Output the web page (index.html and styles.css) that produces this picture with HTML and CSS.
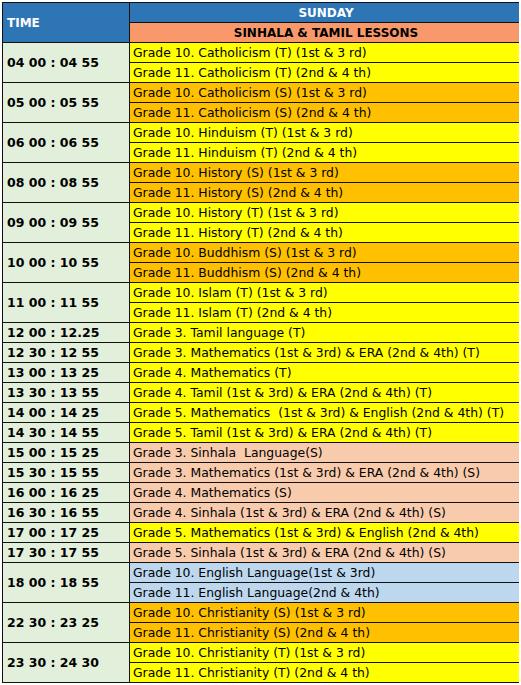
FILE: index.html
```html
<!DOCTYPE html>
<html>
<head>
<meta charset="utf-8">
<link rel="stylesheet" href="styles.css">
</head>
<body>
<table class="sched">
  <colgroup><col class="c-time"><col class="c-les"></colgroup>
  <tr class="hrow"><th class="h-time" rowspan="2">TIME</th><th class="h-day">SUNDAY</th></tr>
  <tr class="hrow"><th class="h-sub">SINHALA &amp; TAMIL LESSONS</th></tr>
  <tr><td class="t" rowspan="2">04 00 : 04 55</td><td class="y">Grade 10. Catholicism (T) (1st &amp; 3 rd)</td></tr>
  <tr><td class="y">Grade 11. Catholicism (T) (2nd &amp; 4 th)</td></tr>
  <tr><td class="t" rowspan="2">05 00 : 05 55</td><td class="o">Grade 10. Catholicism (S) (1st &amp; 3 rd)</td></tr>
  <tr><td class="o">Grade 11. Catholicism (S) (2nd &amp; 4 th)</td></tr>
  <tr><td class="t" rowspan="2">06 00 : 06 55</td><td class="y">Grade 10. Hinduism (T) (1st &amp; 3 rd)</td></tr>
  <tr><td class="y">Grade 11. Hinduism (T) (2nd &amp; 4 th)</td></tr>
  <tr><td class="t" rowspan="2">08 00 : 08 55</td><td class="o">Grade 10. History (S) (1st &amp; 3 rd)</td></tr>
  <tr><td class="o">Grade 11. History (S) (2nd &amp; 4 th)</td></tr>
  <tr><td class="t" rowspan="2">09 00 : 09 55</td><td class="y">Grade 10. History (T) (1st &amp; 3 rd)</td></tr>
  <tr><td class="y">Grade 11. History (T) (2nd &amp; 4 th)</td></tr>
  <tr><td class="t" rowspan="2">10 00 : 10 55</td><td class="o">Grade 10. Buddhism (S) (1st &amp; 3 rd)</td></tr>
  <tr><td class="o">Grade 11. Buddhism (S) (2nd &amp; 4 th)</td></tr>
  <tr><td class="t" rowspan="2">11 00 : 11 55</td><td class="y">Grade 10. Islam (T) (1st &amp; 3 rd)</td></tr>
  <tr><td class="y">Grade 11. Islam (T) (2nd &amp; 4 th)</td></tr>
  <tr><td class="t">12 00 : 12.25</td><td class="y">Grade 3. Tamil language (T)</td></tr>
  <tr><td class="t">12 30 : 12 55</td><td class="y">Grade 3. Mathematics (1st &amp; 3rd) &amp; ERA (2nd &amp; 4th) (T)</td></tr>
  <tr><td class="t">13 00 : 13 25</td><td class="y">Grade 4. Mathematics (T)</td></tr>
  <tr><td class="t">13 30 : 13 55</td><td class="y">Grade 4. Tamil (1st &amp; 3rd) &amp; ERA (2nd &amp; 4th) (T)</td></tr>
  <tr><td class="t">14 00 : 14 25</td><td class="y">Grade 5. Mathematics &nbsp;(1st &amp; 3rd) &amp; English (2nd &amp; 4th) (T)</td></tr>
  <tr><td class="t">14 30 : 14 55</td><td class="y">Grade 5. Tamil (1st &amp; 3rd) &amp; ERA (2nd &amp; 4th) (T)</td></tr>
  <tr><td class="t">15 00 : 15 25</td><td class="p">Grade 3. Sinhala &nbsp;Language(S)</td></tr>
  <tr><td class="t">15 30 : 15 55</td><td class="p">Grade 3. Mathematics (1st &amp; 3rd) &amp; ERA (2nd &amp; 4th) (S)</td></tr>
  <tr><td class="t">16 00 : 16 25</td><td class="p">Grade 4. Mathematics (S)</td></tr>
  <tr><td class="t">16 30 : 16 55</td><td class="p">Grade 4. Sinhala (1st &amp; 3rd) &amp; ERA (2nd &amp; 4th) (S)</td></tr>
  <tr><td class="t">17 00 : 17 25</td><td class="y">Grade 5. Mathematics (1st &amp; 3rd) &amp; English (2nd &amp; 4th)</td></tr>
  <tr><td class="t">17 30 : 17 55</td><td class="p">Grade 5. Sinhala (1st &amp; 3rd) &amp; ERA (2nd &amp; 4th) (S)</td></tr>
  <tr><td class="t" rowspan="2">18 00 : 18 55</td><td class="b">Grade 10. English Language(1st &amp; 3rd)</td></tr>
  <tr><td class="b">Grade 11. English Language(2nd &amp; 4th)</td></tr>
  <tr><td class="t" rowspan="2">22 30 : 23 25</td><td class="o">Grade 10. Christianity (S) (1st &amp; 3 rd)</td></tr>
  <tr><td class="o">Grade 11. Christianity (S) (2nd &amp; 4 th)</td></tr>
  <tr><td class="t" rowspan="2">23 30 : 24 30</td><td class="y">Grade 10. Christianity (T) (1st &amp; 3 rd)</td></tr>
  <tr><td class="y">Grade 11. Christianity (T) (2nd &amp; 4 th)</td></tr>
</table>
</body>
</html>
```
FILE: styles.css
```css
html, body {
  background: #ffffff;
}
body {
  margin: 2px;
  font-family: "DejaVu Sans", Verdana, sans-serif;
  font-size: 12.4px;
  color: #000;
}
.sched {
  border-collapse: collapse;
  width: 518px;
  table-layout: fixed;
  border: 1px solid #111;
}
.c-time { width: 127px; }
.sched td, .sched th {
  border: 1px solid #111;
  height: 19px;
  padding: 0 0 0 3px;
  white-space: nowrap;
  overflow: hidden;
  line-height: 16px;
  vertical-align: middle;
}
.sched th { font-weight: bold; font-size: 12px; }
.h-time {
  background: #2e75b6;
  color: #fff;
  text-align: left;
  padding-left: 4px !important;
}
.h-day {
  background: #2e75b6;
  color: #fff;
  text-align: center;
}
.h-sub {
  background: #f9996b;
  color: #000;
  text-align: center;
}
.t {
  background: #e2efda;
  font-weight: bold;
  font-size: 12.5px;
  padding-left: 4px !important;
}
.y { background: #ffff00; }
.o { background: #ffc000; }
.p { background: #f8cbad; }
.b { background: #bdd7ee; }
```
